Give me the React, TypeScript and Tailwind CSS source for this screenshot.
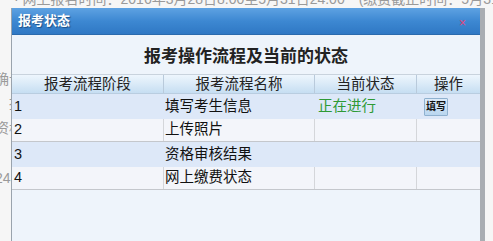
const FONT = { fontFamily: '"Liberation Sans", "Noto Sans CJK SC", sans-serif' };

const rows = [
  { stage: "1", name: "填写考生信息", status: "正在进行", action: true },
  { stage: "2", name: "上传照片", status: "", action: false },
  { stage: "3", name: "资格审核结果", status: "", action: false },
  { stage: "4", name: "网上缴费状态", status: "", action: false },
];

function BackgroundPage() {
  return (
    <div className="text-[14px] text-[#9a9a9a] whitespace-nowrap">
      <div className="-mt-[11px] h-[18px] pl-[14px]">
        · 网上报名时间：2016年3月28日8:00至5月31日24:00　(缴费截止时间：5月31日)月
      </div>
      <div className="h-[61px]" />
      <div className="-ml-[5px] h-[22px] flex items-center">确认报名信息后提交，缴费成功后方可参加考试　　　　　　　　　　　交</div>
      <div className="-ml-[5px] h-[27px] flex items-center">　报名信息确认后无法修改　　　　　　　　　　　　　　　　　　　　无</div>
      <div className="-ml-[5px] h-[50px] flex items-start pt-[1px]">资格审核通过后方可缴费　　　　　　　　　　　　　　　　　　　　　实</div>
      <div className="-ml-[5px] h-[22px] flex items-center">24小时内完成</div>
    </div>
  );
}

function StatusDialog() {
  return (
    <div className="absolute left-[11px] top-[8px] w-[474px] h-[250px] border-l border-[#9aa3ad] border-r-[5px] border-r-[#a9adb2] bg-[#eef4fb] flex flex-col">
      <div className="h-[27px] flex items-center justify-between px-[6px] bg-gradient-to-b from-[#5ea2e2] via-[#3d88d2] to-[#2f78c4] border-b border-[#2a6aad]">
        <span
          className="text-white font-bold text-[13px]"
          style={{ textShadow: "1px 1px 1px #1c4f86" }}
        >
          报考状态
        </span>
        <span className="text-[#e0427a] text-[12px] mr-[8px] mt-[3px]">×</span>
      </div>
      <div className="h-[39px] flex items-center justify-center pt-[5px] text-[17px] font-bold text-[#222]">
        报考操作流程及当前的状态
      </div>
      <div className="grid grid-cols-[152px_151px_102px_63px] h-[20px] text-[14.5px] text-[#222] bg-gradient-to-b from-[#eef6fd] to-[#c6def2] border-t border-[#c9d3dd] border-b border-b-[#b9cde0]">
        <div className="flex items-center justify-center border-r border-[#b9cadb] leading-none">报考流程阶段</div>
        <div className="flex items-center justify-center border-r border-[#b9cadb] leading-none">报考流程名称</div>
        <div className="flex items-center justify-center border-r border-[#b9cadb] leading-none">当前状态</div>
        <div className="flex items-center justify-center leading-none">操作</div>
      </div>
      {rows.map((row, i) => {
        const blue = i % 2 === 0;
        return (
          <div
            key={row.stage}
            className={
              blue
                ? "grid grid-cols-[152px_151px_102px_63px] h-[25px] text-[14.5px] text-[#111] bg-[#dde8f8]"
                : "grid grid-cols-[152px_151px_102px_63px] h-[23px] text-[14.5px] text-[#111] bg-[#f3f5fa] border-b border-[#c4c7cc]"
            }
          >
            <div className={blue ? "flex items-center pl-[2px]" : "flex items-center pl-[2px] border-r border-[#d4d6da]"}>
              {row.stage}
            </div>
            <div className={blue ? "flex items-center pl-[1px]" : "flex items-center pl-[1px] border-r border-[#d4d6da]"}>
              {row.name}
            </div>
            <div
              className={
                blue
                  ? "flex items-center pl-[3px] text-[#2f9a35]"
                  : "flex items-center pl-[3px] border-r border-[#d4d6da]"
              }
            >
              {row.status}
            </div>
            <div className="flex items-center pl-[7px]">
              {row.action && (
                <button className="h-[18px] w-[24px] p-0 flex items-center justify-center text-[10px] font-bold leading-none text-[#111] bg-gradient-to-b from-[#dcebf8] to-[#b9d6ef] border border-[#8fb1cf] rounded-[1px] whitespace-nowrap">
                  填写
                </button>
              )}
            </div>
          </div>
        );
      })}
    </div>
  );
}

export default function App() {
  return (
    <div
      className="relative w-[493px] h-[241px] overflow-hidden bg-[#f6f6f6]"
      style={FONT}
    >
      <BackgroundPage />
      <StatusDialog />
    </div>
  );
}
